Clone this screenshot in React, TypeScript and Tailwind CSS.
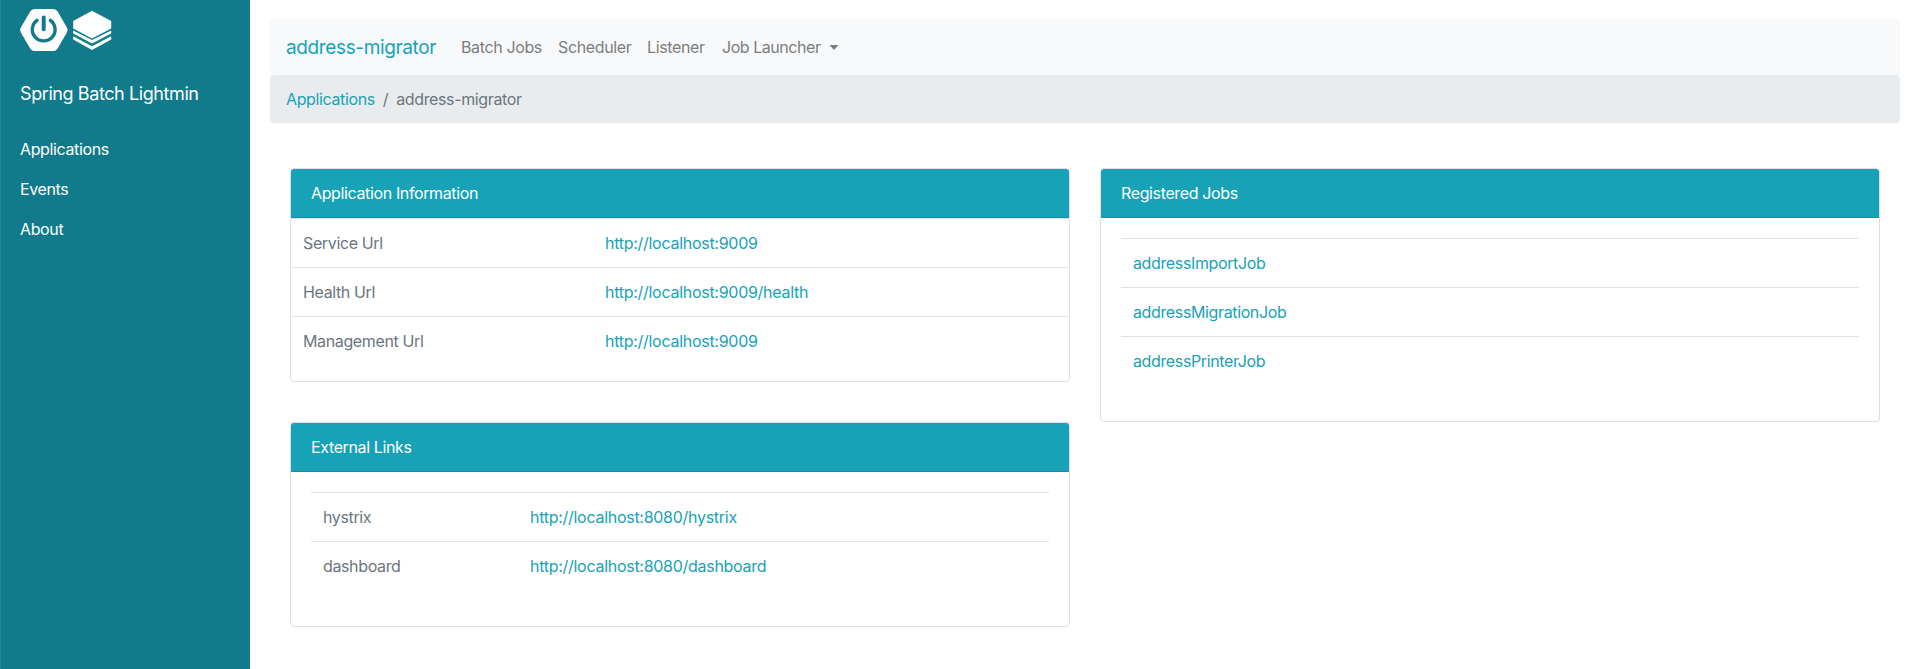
import type { ReactNode } from 'react';

function SpringLogo() {
  return (
    <svg width="50" height="44" viewBox="19 8 50 44" className="shrink-0">
      <path
        d="M34.6 9H53.2Q56.1 9 57.6 11.5L66.9 27.6Q68.3 30 66.9 32.4L57.6 48.5Q56.1 51 53.2 51H34.6Q31.7 51 30.2 48.5L20.8 32.4Q19.4 30 20.8 27.6L30.2 11.5Q31.7 9 34.6 9Z"
        fill="#fff"
      />
      <path d="M37 20.3A11.4 11.4 0 1 0 50.4 20.3" fill="none" stroke="#117a8b" strokeWidth="3.4" strokeLinecap="round" />
      <path d="M43.7 17.6V29.2" stroke="#117a8b" strokeWidth="4" strokeLinecap="round" />
    </svg>
  );
}

function LayersLogo() {
  return (
    <svg width="40" height="42" viewBox="72 9 40 42" className="shrink-0" fill="#fff">
      <path d="M92 10.8L111.2 21V28.6L92 38.4L73.2 28.6V21Z" />
      <path d="M73.2 30.4L92 40L111.2 30.4V33.6L92 43.6L73.2 33.6Z" />
      <path d="M73.2 36.2L92 46.2L111.2 36.2V39.4L92 50L73.2 39.4Z" />
    </svg>
  );
}

function Card({ title, children, className = '' }: { title: string; children: ReactNode; className?: string }) {
  return (
    <section className={`overflow-hidden rounded border border-[#dfdfdf] bg-white ${className}`}>
      <h2 className="h-[49px] border-b border-[#148ea1] bg-[#17a2b8] px-5 py-3 text-white">{title}</h2>
      {children}
    </section>
  );
}

function Row({ label, link, col }: { label?: string; link: string; col?: string }) {
  return (
    <div className="flex h-[49px] border-t border-[#dee2e6] px-3 py-3">
      {label && <span className={col}>{label}</span>}
      <a className={label ? 'tracking-[-0.28px] text-[#17a2b8]' : 'text-[#17a2b8]'}>{link}</a>
    </div>
  );
}

export default function App() {
  return (
    <div className="flex h-[669px] bg-white font-['Inter',sans-serif] text-base leading-6 tracking-[-0.37px] text-[#6c757d]">
      <aside className="w-[250px] shrink-0 border-l border-[#2b8797] bg-[#117a8b] text-white">
        <div className="flex items-start gap-[3px] pt-2 pl-[18px]">
          <SpringLogo />
          <div className="pt-px">
            <LayersLogo />
          </div>
        </div>
        <h1 className="mt-[30px] pl-[19px] text-lg leading-6 tracking-[-0.41px]">Spring Batch Lightmin</h1>
        <nav className="mt-[23px] flex flex-col pl-[19px]">
          <a className="py-2">Applications</a>
          <a className="py-2">Events</a>
          <a className="py-2">About</a>
        </nav>
      </aside>

      <main className="flex-1 pt-[19px] pr-[14px] pl-5">
        <header className="flex h-14 items-center bg-[#f8f9fa] px-4">
          <a className="w-[175px] pt-0.5 text-[19px] leading-[30px] tracking-[-0.37px] text-[#17a2b8]">address-migrator</a>
          <nav className="flex text-[#7c7d7d]">
            <a className="w-[97px]">Batch Jobs</a>
            <a className="w-[89px]">Scheduler</a>
            <a className="w-[75px]">Listener</a>
            <a className="flex items-center gap-2 tracking-[-0.45px]">
              Job Launcher
              <svg width="10" height="5" viewBox="0 0 10 5" fill="currentColor">
                <path d="M0.5 0H9.5L5 5Z" />
              </svg>
            </a>
          </nav>
        </header>
        <div className="flex h-12 rounded bg-[#e9ecef] px-4 py-3">
          <a className="text-[#17a2b8]">Applications</a>
          <span className="pr-2 pl-2">/</span>
          <span>address-migrator</span>
        </div>

        <div className="mt-[45px] grid grid-cols-2 items-start gap-[30px] px-5">
          <div className="flex flex-col gap-10">
            <Card title="Application Information" className="h-[214px]">
              <Row label="Service Url" link="http://localhost:9009" col="w-[302px]" />
              <Row label="Health Url" link="http://localhost:9009/health" col="w-[302px]" />
              <Row label="Management Url" link="http://localhost:9009" col="w-[302px]" />
            </Card>
            <Card title="External Links" className="h-[205px]">
              <div className="p-5">
                <Row label="hystrix" link="http://localhost:8080/hystrix" col="w-[207px]" />
                <Row label="dashboard" link="http://localhost:8080/dashboard" col="w-[207px]" />
              </div>
            </Card>
          </div>
          <Card title="Registered Jobs" className="h-[254px]">
            <div className="p-5">
              <Row link="addressImportJob" />
              <Row link="addressMigrationJob" />
              <Row link="addressPrinterJob" />
            </div>
          </Card>
        </div>
      </main>
    </div>
  );
}
